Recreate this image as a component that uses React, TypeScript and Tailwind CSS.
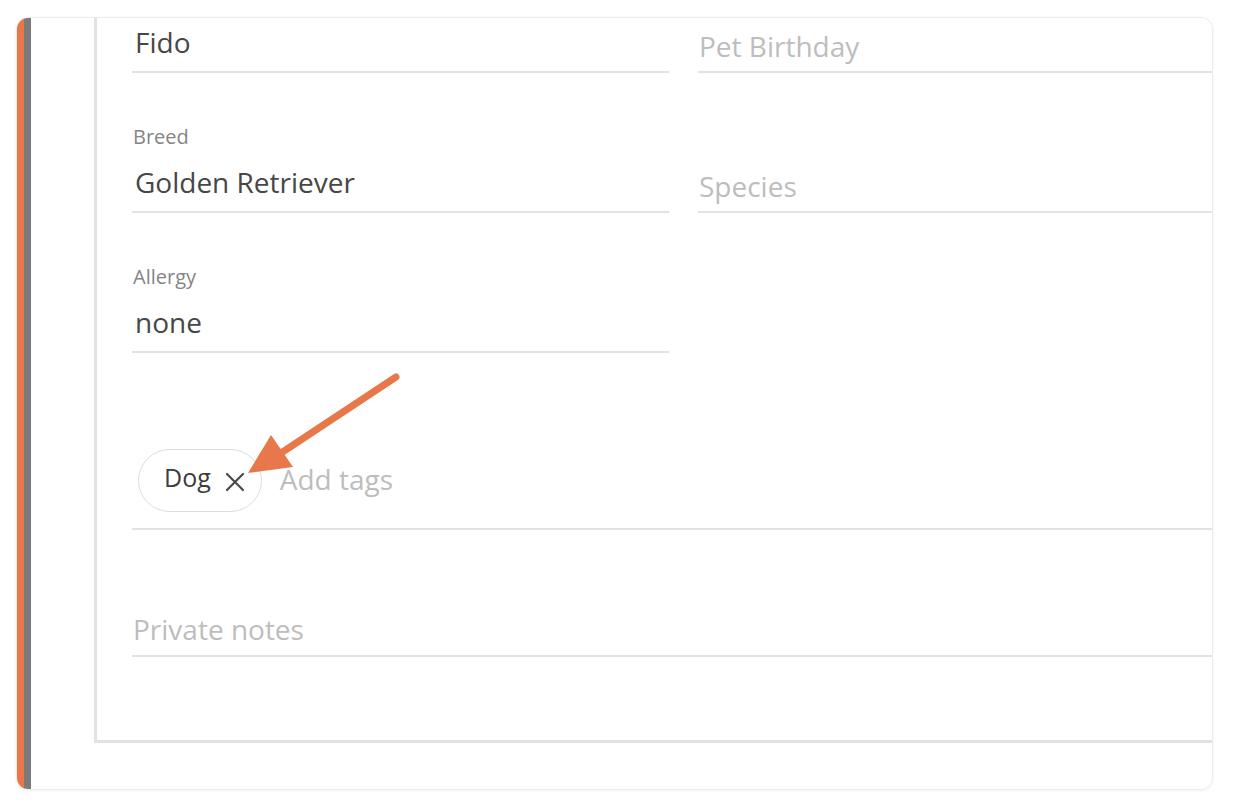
import React from "react";

const font = { fontFamily: '"Open Sans", "Liberation Sans", sans-serif' };

function Field({ label, value, placeholder }: { label?: string; value?: string; placeholder?: string }) {
  return (
    <div className="flex flex-col justify-end border-b-2 border-[#e2e2e2]">
      {label && <div className="text-[20px] leading-[26px] text-[#858585] pl-[1px] mb-[13px]">{label}</div>}
      {value ? (
        <div className="text-[28px] leading-[38px] text-[#474747] pl-[3px] pb-[10px]">{value}</div>
      ) : (
        <div className="text-[28px] leading-[38px] text-[#bdbdbd] pl-[1px] pb-[6px]">{placeholder}</div>
      )}
    </div>
  );
}

const App: React.FC = () => {
  return (
    <div className="w-[1248px] h-[806px] bg-white pt-[17px] pl-[16px]" style={font}>
      <div className="relative w-[1197px] h-[773px] rounded-[12px] border border-[#ececec] overflow-hidden flex shadow-[0_1px_3px_rgba(0,0,0,0.06)]">
        <div className="w-[7px] bg-[#e8784a]" />
        <div className="w-[7px] bg-[#7a7a7a]" />
        <div className="flex-1 pl-[63px] pb-[46px] flex">
          <div className="flex-1 border-l-[3px] border-b-[3px] border-[#e2e2e2] pl-[35px] pb-[84px] flex flex-col">
            <div className="grid grid-cols-[537px_1fr] gap-x-[29px] gap-y-[51px] items-end">
              <div className="h-[55px] flex flex-col justify-end">
                <Field value="Fido" />
              </div>
              <Field placeholder="Pet Birthday" />
              <Field label="Breed" value="Golden Retriever" />
              <Field placeholder="Species" />
              <Field label="Allergy" value="none" />
              <div />
            </div>

            <div className="mt-[96px] flex items-center border-b-2 border-[#e2e2e2] pb-[16px] pl-[6px]">
              <div className="h-[63px] flex items-center gap-[14px] pl-[25px] pr-[16px] rounded-full border border-[#dcdcdc]">
                <span className="text-[25px] leading-[34px] text-[#3d3d3d] mb-[8px]">Dog</span>
                <svg width="20" height="20" viewBox="0 0 20 20" className="mt-[3px]">
                  <path d="M2 2 L18 18 M18 2 L2 18" stroke="#4a4a4a" strokeWidth="2.2" strokeLinecap="round" />
                </svg>
              </div>
              <span className="ml-[18px] text-[28px] text-[#bdbdbd] mb-[3px]">Add tags</span>
            </div>

            <div className="mt-[80px] border-b-2 border-[#e2e2e2] pb-[7px]">
              <div className="text-[28px] leading-[38px] text-[#bdbdbd] pl-[1px]">Private notes</div>
            </div>
          </div>
        </div>
      </div>

      <svg className="absolute left-0 top-0 pointer-events-none" width="1248" height="806">
        <line x1="396" y1="377" x2="278" y2="455" stroke="#e8784a" strokeWidth="7" strokeLinecap="round" />
        <polygon points="248,473 271,435 293,467" fill="#e8784a" />
      </svg>
    </div>
  );
};

export default App;
